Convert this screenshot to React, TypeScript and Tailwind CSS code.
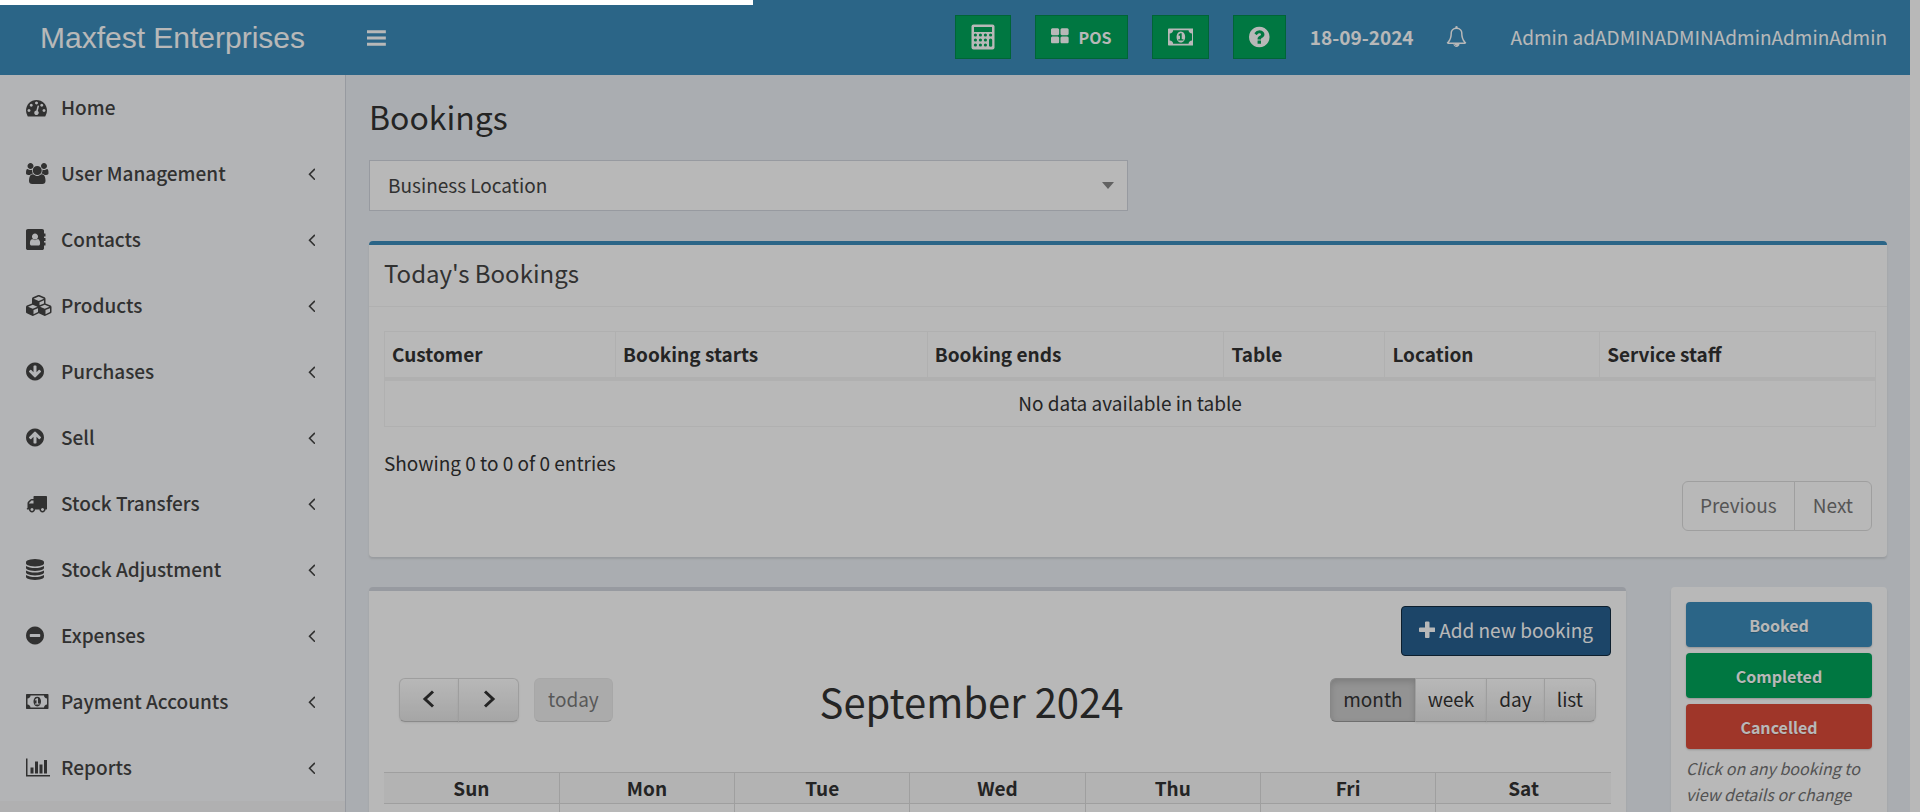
import React from "react";

type IconProps = { d: string; w: number; className?: string; flip?: boolean };

const CIRCLE =
  "M1536 896q0 209-103 385.5t-279.5 279.5-385.5 103-385.5-103-279.5-279.5-103-385.5 103-385.5 279.5-279.5 385.5-103 385.5 103 279.5 279.5 103 385.5z";

const P = {
  dashboard:
    "M384 1152q0-53-37.5-90.5t-90.5-37.5-90.5 37.5-37.5 90.5 37.5 90.5 90.5 37.5 90.5-37.5 37.5-90.5zm192-448q0-53-37.5-90.5t-90.5-37.5-90.5 37.5-37.5 90.5 37.5 90.5 90.5 37.5 90.5-37.5 37.5-90.5zm428 481l101-382q6-26-7.5-48.5t-38.5-29.5-48 6.5-30 39.5l-101 382q-60 5-107 43.5t-63 98.5q-20 77 20 146t117 89 146-20 89-117q16-60-6-117t-72-91zm660-33q0-53-37.5-90.5t-90.5-37.5-90.5 37.5-37.5 90.5 37.5 90.5 90.5 37.5 90.5-37.5 37.5-90.5zm-640-640q0-53-37.5-90.5t-90.5-37.5-90.5 37.5-37.5 90.5 37.5 90.5 90.5 37.5 90.5-37.5 37.5-90.5zm448 192q0-53-37.5-90.5t-90.5-37.5-90.5 37.5-37.5 90.5 37.5 90.5 90.5 37.5 90.5-37.5 37.5-90.5zm320 448q0 261-141 483-19 29-54 29h-1402q-35 0-54-29-141-221-141-483 0-182 71-348t191-286 286-191 348-71 348 71 286 191 191 286 71 348z",
  users:
    "M593 896q-162 5-265 128h-134q-82 0-138-40.5t-56-118.5q0-353 124-353 6 0 43.5 21t97.5 42.5 119 21.5q67 0 133-23-5 37-5 66 0 139 81 256zm1071 637q0 120-73 189.5t-194 69.5h-874q-121 0-194-69.5t-73-189.5q0-53 3.5-103.5t14-109 26.5-108.5 43-97.5 62-81 85.5-53.5 111.5-20q10 0 43 21.5t73 48 107 48 135 21.5 135-21.5 107-48 73-48 43-21.5q61 0 111.5 20t85.5 53.5 62 81 43 97.5 26.5 108.5 14 109 3.5 103.5zm-1024-1277q0 106-75 181t-181 75-181-75-75-181 75-181 181-75 181 75 75 181zm704 384q0 159-112.5 271.5t-271.5 112.5-271.5-112.5-112.5-271.5 112.5-271.5 271.5-112.5 271.5 112.5 112.5 271.5zm576 225q0 78-56 118.5t-138 40.5h-134q-103-123-265-128 81-117 81-256 0-29-5-66 66 23 133 23 59 0 119-21.5t97.5-42.5 43.5-21q124 0 124 353zm-128-609q0 106-75 181t-181 75-181-75-75-181 75-181 181-75 181 75 75 181z",
  book: "M1028 644q0 107-76.5 183t-183.5 76-183.5-76-76.5-183q0-108 76.5-184t183.5-76 183.5 76 76.5 184zm-48 220q46 0 82.5 17t60 47.5 39.5 67 24 81 11.5 82.5 3.5 79q0 67-39.5 118.5t-105.5 51.5h-576q-66 0-105.5-51.5t-39.5-118.5q0-48 4.5-93.5t18.5-98.5 36.5-91.5 63-64.5 93.5-26h5q7 4 32 19.5t35.5 21 33 17 37 16 35 9 39.5 4.5 39.5-4.5 35-9 37-16 33-17 35.5-21 32-19.5zm684-256q0 13-9.5 22.5t-22.5 9.5h-96v128h96q13 0 22.5 9.5t9.5 22.5v192q0 13-9.5 22.5t-22.5 9.5h-96v128h96q13 0 22.5 9.5t9.5 22.5v192q0 13-9.5 22.5t-22.5 9.5h-96v224q0 66-47 113t-113 47h-1216q-66 0-113-47t-47-113v-1472q0-66 47-113t113-47h1216q66 0 113 47t47 113v224h96q13 0 22.5 9.5t9.5 22.5v192z",
  cubes:
    "M640 1632l384-192v-314l-384 164v342zm-64-454l404-173-404-173-404 173zm1088 454l384-192v-314l-384 164v342zm-64-454l404-173-404-173-404 173zm-448-293l384-165v-266l-384 164v267zm-64-379l441-189-441-189-441 189zm1088 518v416q0 36-19 67t-52 47l-448 224q-25 14-57 14t-57-14l-448-224q-4-2-7-4-2 2-7 4l-448 224q-25 14-57 14t-57-14l-448-224q-33-16-52-47t-19-67v-416q0-38 21.5-70t56.5-48l434-186v-400q0-38 21.5-70t56.5-48l448-192q23-10 50-10t50 10l448 192q35 16 56.5 48t21.5 70v400l434 186q36 16 57 48t21 70z",
  down:
    "M1284 897q0-27-18-45l-91-91q-18-18-45-18t-45 18l-189 189v-502q0-26-19-45t-45-19h-128q-26 0-45 19t-19 45v502l-189-189q-19-19-45-19t-45 19l-91 91q-18 18-18 45t18 45l362 362 91 91q18 18 45 18t45-18l91-91 362-362q18-18 18-45z" +
    CIRCLE,
  truck:
    "M640 1408q0-52-38-90t-90-38-90 38-38 90 38 90 90 38 90-38 38-90zm-384-512h384v-256h-158q-13 0-22 9l-195 195q-9 9-9 22v30zm1280 512q0-52-38-90t-90-38-90 38-38 90 38 90 90 38 90-38 38-90zm256-1088v1024q0 15-4 26.5t-13.5 18.5-16.5 11.5-23.5 6-22.5 2-25.5 0-22.5-.5q0 106-75 181t-181 75-181-75-75-181h-384q0 106-75 181t-181 75-181-75-75-181h-64q-3 0-22.5.5t-25.5 0-22.5-2-23.5-6-16.5-11.5-13.5-18.5-4-26.5q0-26 19-45t45-19v-320q0-8-.5-35t0-38 2.5-34.5 6.5-37 14-30.5 22.5-30l198-198q19-19 50.5-32t58.5-13h160v-192q0-26 19-45t45-19h1024q26 0 45 19t19 45z",
  database:
    "M768 768q237 0 443-43t325-127v170q0 69-103 128t-280 93.5-385 34.5-385-34.5-280-93.5-103-128v-170q119 84 325 127t443 43zm0 768q237 0 443-43t325-127v170q0 69-103 128t-280 93.5-385 34.5-385-34.5-280-93.5-103-128v-170q119 84 325 127t443 43zm0-384q237 0 443-43t325-127v170q0 69-103 128t-280 93.5-385 34.5-385-34.5-280-93.5-103-128v-170q119 84 325 127t443 43zm0-1152q208 0 385 34.5t280 93.5 103 128v128q0 69-103 128t-280 93.5-385 34.5-385-34.5-280-93.5-103-128v-128q0-69 103-128t280-93.5 385-34.5z",
  minus:
    "M1216 960v-128q0-26-19-45t-45-19h-768q-26 0-45 19t-19 45v128q0 26 19 45t45 19h768q26 0 45-19t19-45z" +
    CIRCLE,
  money:
    "M768 1152h384v-96h-128v-448h-114l-148 137 77 80q42-37 55-57h2v288h-128v96zm512-256q0 70-21 142t-59.5 134-101.5 101-138 39-138-39-101.5-101-59.5-134-21-142 21-142 59.5-134 101.5-101 138-39 138 39 101.5 101 59.5 134 21 142zm512 256v-512q-106 0-181-75t-75-181h-1152q0 106-75 181t-181 75v512q106 0 181 75t75 181h1152q0-106 75-181t181-75zm128-832v1152q0 26-19 45t-45 19h-1792q-26 0-45-19t-19-45v-1152q0-26 19-45t45-19h1792q26 0 45 19t19 45z",
  chart:
    "M640 896v512h-256v-512h256zm384-512v1024h-256v-1024h256zm1024 1152v128h-2048v-1536h128v1408h1920zm-640-896v768h-256v-768h256zm384-384v1152h-256v-1152h256z",
  thLarge:
    "M768 1024v384q0 52-38 90t-90 38h-512q-52 0-90-38t-38-90v-384q0-52 38-90t90-38h512q52 0 90 38t38 90zm0-768v384q0 52-38 90t-90 38h-512q-52 0-90-38t-38-90v-384q0-52 38-90t90-38h512q52 0 90 38t38 90zm896 768v384q0 52-38 90t-90 38h-512q-52 0-90-38t-38-90v-384q0-52 38-90t90-38h512q52 0 90 38t38 90zm0-768v384q0 52-38 90t-90 38h-512q-52 0-90-38t-38-90v-384q0-52 38-90t90-38h512q52 0 90 38t38 90z",
  question:
    "M896 1376v-192q0-14-9-23t-23-9h-192q-14 0-23 9t-9 23v192q0 14 9 23t23 9h192q14 0 23-9t9-23zm256-672q0-88-55.5-163t-138.5-116-170-41q-243 0-371 213-15 24 8 42l132 100q7 6 19 6 16 0 25-12 53-68 86-92 34-24 86-24 48 0 85.5 26t37.5 59q0 38-20 61t-68 45q-63 28-115.5 86.5t-52.5 125.5v36q0 14 9 23t23 9h192q14 0 23-9t9-23q0-19 21.5-49.5t54.5-49.5q32-18 49-28.5t46-35 44.5-48 28-60.5 12.5-81z" +
    CIRCLE,
  bell: "M912 1696q0-16-16-16-59 0-101.5-42.5t-42.5-101.5q0-16-16-16t-16 16q0 73 51.5 124.5t124.5 51.5q16 0 16-16zm-666-288h1300q-266-300-266-832 0-51-24-105t-69-103-121.5-80.5-169.5-31.5-169.5 31.5-121.5 80.5-69 103-24 105q0 532-266 832zm1482 0q0 52-38 90t-90 38h-448q0 106-75 181t-181 75-181-75-75-181h-448q-52 0-90-38t-38-90q50-42 91-88t85-119.5 74.5-158.5 50-206 19.5-260q0-152 117-282.5t307-158.5q-8-19-8-39 0-40 28-68t68-28 68 28 28 68q0 20-8 39 190 28 307 158.5t117 282.5q0 139 19.5 260t50 206 74.5 158.5 85 119.5 91 88z",
  angle:
    "M627 544q0 13-10 23l-393 393 393 393q10 10 10 23t-10 23l-50 50q-10 10-23 10t-23-10l-466-466q-10-10-10-23t10-23l466-466q10-10 23-10t23 10l50 50q10 10 10 23z",
  bars: "M0 256h1536v256h-1536zM0 768h1536v256h-1536zM0 1280h1536v256h-1536z",
  plus: "M1408 736v192q0 40-28 68t-68 28h-416v416q0 40-28 68t-68 28h-192q-40 0-68-28t-28-68v-416h-416q-40 0-68-28t-28-68v-192q0-40 28-68t68-28h416v-416q0-40 28-68t68-28h192q40 0 68 28t28 68v416h416q40 0 68 28t28 68z",
};

function Icon({ d, w, className = "h-[21px]", flip }: IconProps) {
  return (
    <svg viewBox={`0 0 ${w} 1792`} className={`${className} w-auto shrink-0`} fill="currentColor" aria-hidden="true">
      <path d={d} fillRule="evenodd" transform={flip ? "translate(0 1792) scale(1 -1)" : undefined} />
    </svg>
  );
}

function Calculator() {
  return (
    <svg viewBox="0 0 24 26" className="h-[26px] w-[24px]" aria-hidden="true">
      <rect x="0.5" y="0.5" width="23" height="25" rx="2" fill="#fff" />
      <rect x="3" y="3" width="18" height="5" fill="#00a65a" />
      {[11, 16, 21].map((y) =>
        [4, 9, 14].map((x) => <circle key={`${x}-${y}`} cx={x + 0.4} cy={y} r="1.6" fill="#00a65a" />),
      )}
      <circle cx="19.6" cy="11" r="1.6" fill="#00a65a" />
      <rect x="18" y="14.5" width="3.2" height="8.2" rx="1.5" fill="#00a65a" />
    </svg>
  );
}

function Chevron({ right }: { right?: boolean }) {
  return (
    <svg viewBox="0 0 14 18" className="h-[18px] w-[14px]" fill="none" stroke="#333" strokeWidth="3" aria-hidden="true">
      <path d={right ? "M3 1.5 L11 9 L3 16.5" : "M11 1.5 L3 9 L11 16.5"} />
    </svg>
  );
}

const menu = [
  { label: "Home", d: P.dashboard, w: 1792, leaf: true },
  { label: "User Management", d: P.users, w: 1920 },
  { label: "Contacts", d: P.book, w: 1664 },
  { label: "Products", d: P.cubes, w: 2304 },
  { label: "Purchases", d: P.down, w: 1536 },
  { label: "Sell", d: P.down, w: 1536, flip: true },
  { label: "Stock Transfers", d: P.truck, w: 1792 },
  { label: "Stock Adjustment", d: P.database, w: 1536 },
  { label: "Expenses", d: P.minus, w: 1536 },
  { label: "Payment Accounts", d: P.money, w: 1920 },
  { label: "Reports", d: P.chart, w: 2048 },
];

const greenButton = "flex h-[44px] items-center border border-[#008d4c] bg-[#00a65a] px-[15px] text-white";

function Header() {
  return (
    <header className="flex h-[75px] shrink-0 items-center bg-[#3c8dbc] text-white">
      <a
        href="#"
        className="w-[345px] shrink-0 text-center font-['Liberation_Sans',Arial,sans-serif] text-[30px] leading-[60px] whitespace-nowrap"
      >
        Maxfest Enterprises
      </a>
      <button type="button" aria-label="Toggle navigation" className="ml-[22px]">
        <Icon d={P.bars} w={1536} className="h-[22px]" />
      </button>
      <div className="ml-auto flex items-center pr-[23px] pb-0.5">
        <div className="flex gap-6">
          <button type="button" aria-label="Calculator" className={greenButton}>
            <Calculator />
          </button>
          <button type="button" className={`${greenButton} gap-[10px] text-[16px] font-bold`}>
            <Icon d={P.thLarge} w={1664} className="h-[19px]" />
            POS
          </button>
          <button type="button" aria-label="Profit" className={greenButton}>
            <Icon d={P.money} w={1920} className="h-[24px]" />
          </button>
          <button type="button" aria-label="Help" className={greenButton}>
            <Icon d={P.question} w={1536} className="h-[24px]" />
          </button>
        </div>
        <span className="ml-6 font-bold">18-09-2024</span>
        <button type="button" aria-label="Notifications" className="ml-8">
          <Icon d={P.bell} w={1792} />
        </button>
        <a href="#" className="ml-11 whitespace-nowrap">
          Admin adADMINADMINAdminAdminAdmin
        </a>
      </div>
    </header>
  );
}

function Sidebar() {
  return (
    <nav className="w-[346px] shrink-0 overflow-hidden border-r border-[#d2d6de] bg-[#f9fafc] text-[#444]">
      <ul>
        {menu.map((m) => (
          <li key={m.label}>
            <a href="#" className="flex h-[66px] items-center pr-[30px] pb-0.5 pl-[26px] font-medium">
              <span className="flex w-[35px] shrink-0">
                <Icon d={m.d} w={m.w} flip={m.flip} />
              </span>
              {m.label}
              {!m.leaf && <Icon d={P.angle} w={640} className="ml-auto h-[21px]" />}
            </a>
          </li>
        ))}
        <li className="h-[66px] bg-[#f4f4f5]" />
      </ul>
    </nav>
  );
}

const columns: [string, string][] = [
  ["Customer", "w-[15.5%]"],
  ["Booking starts", "w-[20.9%]"],
  ["Booking ends", "w-[19.9%]"],
  ["Table", "w-[10.8%]"],
  ["Location", "w-[14.4%]"],
  ["Service staff", "w-[18.5%]"],
];

function TodaysBookings() {
  return (
    <section className="mt-[30px] rounded-[4px] border-t-4 border-[#3c8dbc] bg-white shadow-[0_2px_2px_rgba(0,0,0,0.1)]">
      <h2 className="border-b border-[#f4f4f4] px-[15px] pt-[13px] pb-[18px] text-[24px] leading-[30px] text-[#444]">
        Today's Bookings
      </h2>
      <div className="px-[15px] pt-6 pb-[26px]">
        <div className="-mr-1">
          <table className="w-full table-fixed border-collapse border border-[#f4f4f4] text-left">
            <thead>
              <tr>
                {columns.map(([name, width]) => (
                  <th key={name} className={`${width} border border-b-4 border-[#f4f4f4] px-[7px] pt-[7px] pb-2 leading-[30px] font-bold`}>
                    {name}
                  </th>
                ))}
              </tr>
            </thead>
            <tbody>
              <tr>
                <td colSpan={6} className="border border-[#f4f4f4] px-2 pt-[7px] pb-2 text-center leading-[30px]">
                  No data available in table
                </td>
              </tr>
            </tbody>
          </table>
        </div>
        <p className="mt-[21px] leading-[30px]">Showing 0 to 0 of 0 entries</p>
        <div className="mt-[3px] flex justify-end text-[#777]">
          <button type="button" className="h-[50px] rounded-l-[6px] border border-[#ddd] bg-white px-[17px] pb-0.5">
            Previous
          </button>
          <button type="button" className="-ml-px h-[50px] rounded-r-[6px] border border-[#ddd] bg-white px-[18px] pb-0.5">
            Next
          </button>
        </div>
      </div>
    </section>
  );
}

const fcBase = "flex h-[44px] items-center border border-[#dcdcdc] border-b-[#bfbfbf] text-[#333] pb-0.5";
const fcButton = `${fcBase} bg-linear-to-b from-white to-[#e6e6e6] shadow-[0_1px_2px_rgba(0,0,0,0.08)] [text-shadow:0_1px_1px_rgba(255,255,255,0.75)]`;

const days = ["Sun", "Mon", "Tue", "Wed", "Thu", "Fri", "Sat"];

function CalendarPanel() {
  return (
    <section className="min-w-0 flex-1 rounded-t-[4px] border-t-4 border-[#d2d6de] bg-white px-[15px] pt-[15px] shadow-[0_2px_2px_rgba(0,0,0,0.1)]">
      <div className="flex justify-end">
        <button type="button" className="flex h-[50px] items-center gap-1 rounded-[4px] border border-[#122b40] bg-[#286090] px-[17px] pb-0.5 text-white">
          <Icon d={P.plus} w={1408} className="h-[21px]" />
          Add new booking
        </button>
      </div>
      <div className="mt-[22px] flex items-start justify-between px-[15px]">
        <div className="flex">
          <button type="button" aria-label="Previous month" className={`${fcButton} w-[60px] justify-center rounded-l-[6px]`}>
            <Chevron />
          </button>
          <button type="button" aria-label="Next month" className={`${fcButton} -ml-px w-[61px] justify-center rounded-r-[6px]`}>
            <Chevron right />
          </button>
          <button type="button" disabled className={`${fcBase} ml-[15px] rounded-[6px] bg-[#e6e6e6] px-[13px] opacity-65`}>
            today
          </button>
        </div>
        <h2 className="text-[40px] leading-[46px]">September 2024</h2>
        <div className="flex justify-end">
          <button type="button" className="h-[44px] rounded-l-[6px] border border-[#bbb] border-b-[#999] bg-[#ccc] px-[12px] pb-0.5 text-[#333] shadow-[inset_0_3px_6px_rgba(0,0,0,0.15)]">
            month
          </button>
          <button type="button" className={`${fcButton} -ml-px px-[12px]`}>
            week
          </button>
          <button type="button" className={`${fcButton} -ml-px px-[12px]`}>
            day
          </button>
          <button type="button" className={`${fcButton} -ml-px rounded-r-[6px] px-[12px]`}>
            list
          </button>
        </div>
      </div>
      <table className="mt-12 w-full table-fixed border-collapse">
        <thead>
          <tr>
            {days.map((d) => (
              <th key={d} className="border border-[#ddd] bg-[#f9f9f9] leading-[30px] font-bold first:border-l-0 last:border-r-0">
                {d}
              </th>
            ))}
          </tr>
        </thead>
        <tbody>
          <tr>
            {days.map((d) => (
              <td key={d} className="h-[120px] border border-[#ddd] first:border-l-0 last:border-r-0" />
            ))}
          </tr>
        </tbody>
      </table>
    </section>
  );
}

const statuses: [string, string][] = [
  ["Booked", "bg-[#3c8dbc]"],
  ["Completed", "bg-[#00a65a]"],
  ["Cancelled", "bg-[#dd4b39]"],
];

function Legend() {
  return (
    <aside className="w-[216px] shrink-0 rounded-t-[4px] bg-white p-[15px] shadow-[0_2px_2px_rgba(0,0,0,0.1)]">
      <ul className="flex flex-col gap-[6px]">
        {statuses.map(([label, color]) => (
          <li
            key={label}
            className={`${color} flex h-[45px] items-center justify-center rounded-[4px] text-[16px] font-bold text-white shadow-[0_1px_2px_rgba(0,0,0,0.2)] [text-shadow:0_1px_1px_rgba(0,0,0,0.2)]`}
          >
            {label}
          </li>
        ))}
      </ul>
      <p className="mt-1.5 text-[16px] leading-[26px] text-[#737373] italic">Click on any booking to view details or change</p>
    </aside>
  );
}

export default function App() {
  return (
    <div className="flex h-screen flex-col overflow-hidden bg-white pr-[10px] font-['Noto_Sans_CJK_SC',sans-serif] text-[19px] leading-[30px] text-[#333]">
      <Header />
      <div className="flex min-h-0 flex-1">
        <Sidebar />
        <main className="min-w-0 flex-1 overflow-hidden bg-[#ecf0f5] px-[23px] pt-[21px]">
          <h1 className="text-[32px] leading-[40px]">Bookings</h1>
          <div className="relative mt-6 w-1/2">
            <select
              aria-label="Business Location"
              className="h-[51px] w-full appearance-none border border-[#d2d6de] bg-white px-[18px] pb-0.5 text-[#444]"
            >
              <option>Business Location</option>
            </select>
            <svg viewBox="0 0 12 7" className="pointer-events-none absolute top-[22px] right-[14px] h-[7px] w-[12px]" fill="#888" aria-hidden="true">
              <path d="M0 0h12l-6 7z" />
            </svg>
          </div>
          <TodaysBookings />
          <div className="mt-[30px] flex gap-[45px]">
            <CalendarPanel />
            <Legend />
          </div>
        </main>
      </div>
      <div className="pointer-events-none fixed inset-0 z-40 bg-black/28" />
      <div className="fixed top-0 left-0 z-50 h-[5px] w-[39.2%] bg-white" />
    </div>
  );
}
